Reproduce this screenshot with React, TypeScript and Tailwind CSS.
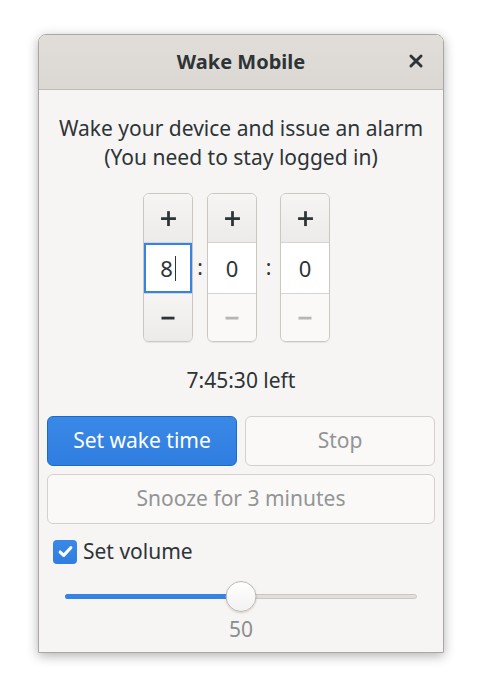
import React from "react";

const font = { fontFamily: '"Noto Sans", "Open Sans", sans-serif' };

function PlusIcon({ className }: { className?: string }) {
  return (
    <svg viewBox="0 0 16 16" className={className} fill="currentColor">
      <rect x="1" y="6.8" width="14" height="2.6" />
      <rect x="6.7" y="1.1" width="2.6" height="14" />
    </svg>
  );
}

function MinusIcon({ className }: { className?: string }) {
  return (
    <svg viewBox="0 0 16 16" className={className} fill="currentColor">
      <rect x="1.5" y="6.7" width="13" height="2.8" />
    </svg>
  );
}

function Spin({ value, focused, minusEnabled }: { value: string; focused?: boolean; minusEnabled?: boolean }) {
  return (
    <div className="flex w-[50px] flex-col overflow-hidden rounded-[6px] border border-[#cdc7c2] shadow-[0_1px_1px_rgba(0,0,0,0.07)]">
      <div className="flex h-[49px] items-center justify-center border-b border-[#d8d4d0] bg-gradient-to-b from-[#f6f5f4] to-[#edebe9] text-[#2e3436]">
        <PlusIcon className="h-[17px] w-[17px]" />
      </div>
      <div
        className={`flex h-[50px] items-center justify-center bg-white text-[22px] text-[#2e3436] ${
          focused ? "border-2 border-[#3584e4]" : ""
        }`}
      >
        {value}
        {focused && <span className="ml-[2px] inline-block h-[25px] w-px bg-[#2e3436]" />}
      </div>
      <div
        className={`flex h-[48px] items-center justify-center border-t border-[#d8d4d0] ${
          minusEnabled
            ? "bg-gradient-to-b from-[#f6f5f4] to-[#edebe9] text-[#2e3436]"
            : "bg-[#faf9f8] text-[#b8b5b2]"
        }`}
      >
        <MinusIcon className="h-4 w-4" />
      </div>
    </div>
  );
}

export default function App() {
  return (
    <div className="min-h-screen w-full bg-white pt-[34px] pl-[38px]" style={font}>
      <div className="flex h-[619px] w-[406px] flex-col overflow-hidden rounded-t-[8px] border border-[#a9a6a3] shadow-[0_3px_12px_rgba(0,0,0,0.3)]">
        {/* Header bar */}
        <div className="relative flex h-[55px] shrink-0 items-center justify-center border-b border-[#c0bbb6] bg-gradient-to-b from-[#e1deda] to-[#dbd8d4]">
          <span className="text-[20px] font-bold text-[#2e3436]">Wake Mobile</span>
          <button className="absolute right-[18px] top-[17px] text-[#2e3436]" aria-label="Close">
            <svg viewBox="0 0 16 16" className="h-[18px] w-[18px]" stroke="currentColor" strokeWidth="2.6" strokeLinecap="round">
              <path d="M3.5 3.5l9 9M12.5 3.5l-9 9" />
            </svg>
          </button>
        </div>

        {/* Body */}
        <div className="flex flex-1 flex-col bg-[#f6f5f4] px-[8px]">
          <p className="mt-[24px] text-center text-[21px] leading-[29px] text-[#2e3436]">
            Wake your device and issue an alarm
            <br />
            (You need to stay logged in)
          </p>

          <div className="mt-[21px] flex items-center justify-center">
            <div className="mr-[9px] flex items-center">
              <Spin value="8" focused minusEnabled />
              <span className="mx-[4px] w-[6px] text-center text-[21px] text-[#2e3436]">:</span>
              <Spin value="0" />
              <span className="mx-[6px] w-[11px] text-center text-[21px] text-[#2e3436]">:</span>
              <Spin value="0" />
            </div>
          </div>

          <div className="mt-[24px] text-center text-[21px] leading-[28px] text-[#2e3436]">7:45:30 left</div>

          <div className="mt-[22px] grid grid-cols-2 gap-[8px]">
            <button className="h-[50px] rounded-[6px] border border-[#1b6acb] bg-gradient-to-b from-[#3a88e6] to-[#2f7ee0] text-[21px] text-white">
              Set wake time
            </button>
            <button className="h-[50px] rounded-[6px] border border-[#d5d0cc] bg-[#faf9f8] text-[21px] text-[#929595]">
              Stop
            </button>
          </div>
          <button className="mt-[8px] h-[50px] rounded-[6px] border border-[#d5d0cc] bg-[#faf9f8] text-[21px] text-[#929595]">
            Snooze for 3 minutes
          </button>

          <label className="mt-[12px] flex items-center pl-[6px]">
            <span className="flex h-[24px] w-[24px] items-center justify-center rounded-[4px] bg-gradient-to-b from-[#3a88e6] to-[#2f7ee0]">
              <svg viewBox="0 0 16 16" className="h-[17px] w-[17px]" fill="none" stroke="white" strokeWidth="3" strokeLinecap="round" strokeLinejoin="round">
                <path d="M3 8.5l3.3 3.2L13 4.5" />
              </svg>
            </span>
            <span className="ml-[6px] text-[21px] text-[#2e3436]">Set volume</span>
          </label>

          <div className="mt-[13px] px-[18px]">
            <div className="relative h-[30px]">
              <div className="absolute left-0 right-0 top-[13px] h-[5px] rounded-full border border-[#cdc7c2] bg-[#e1dedb]" />
              <div className="absolute left-0 top-[13px] h-[5px] w-[50%] rounded-full bg-[#3584e4]" />
              <div className="absolute left-[50%] top-0 h-[31px] w-[31px] -translate-x-1/2 rounded-full border border-[#bfb8b1] bg-gradient-to-b from-white to-[#f3f2f1] shadow-[0_1px_2px_rgba(0,0,0,0.15)]" />
            </div>
          </div>
          <div className="mt-[5px] text-center text-[21px] leading-[26px] text-[#8b8e8f]">50</div>
        </div>
      </div>
    </div>
  );
}
